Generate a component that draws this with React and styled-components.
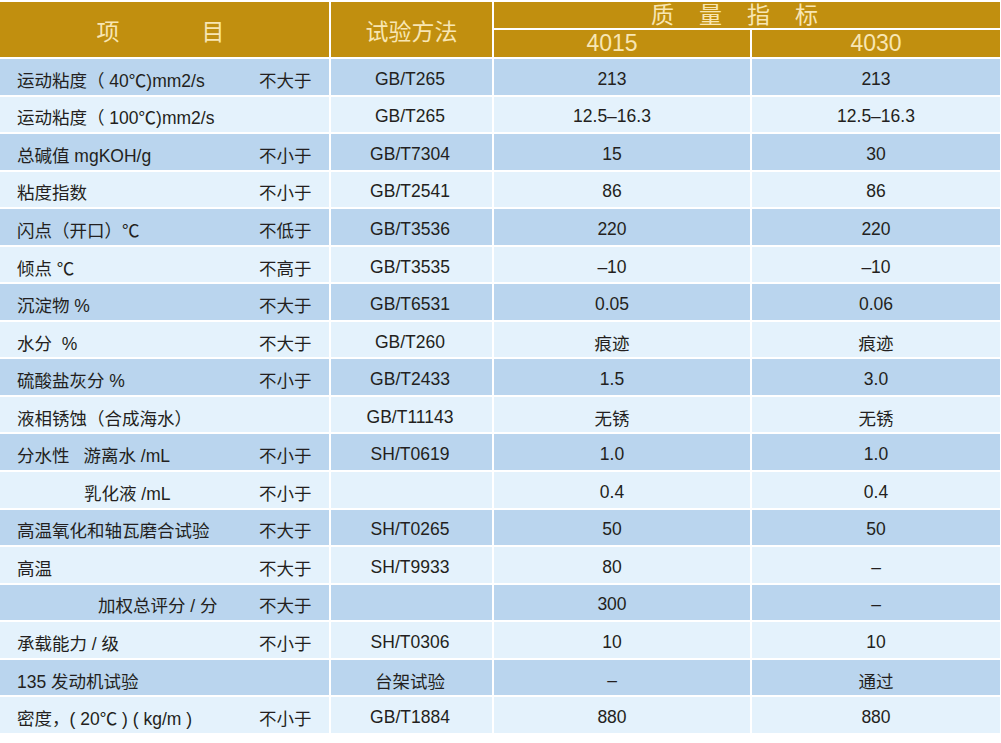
import React from "react";
import styled, { createGlobalStyle } from "styled-components";

const GlobalStyle = createGlobalStyle`
  body {
    margin: 0;
    background: #ffffff;
    font-family: "Liberation Sans", "Noto Sans CJK SC", sans-serif;
    color: #231f20;
  }
`;

const Sheet = styled.div`
  display: grid;
  grid-template-columns: 329px 161px 256px 248px;
  grid-template-rows: 26px 27px repeat(18, 35.55px);
  gap: 2px;
  padding-top: 2px;
  width: 1000px;
`;

const HeadCell = styled.div`
  grid-row: ${(p) => p.$row};
  grid-column: ${(p) => p.$col};
  background: #c18f0f;
  color: #f8e6b3;
  font-size: 23px;
  display: flex;
  align-items: center;
  justify-content: center;
  gap: ${(p) => p.$gap || 0}px;
  padding-right: ${(p) => p.$shift || 0}px;
  padding-top: ${(p) => p.$drop || 0}px;
  letter-spacing: ${(p) => p.$spacing || 0}px;
  line-height: 1;
`;

const Cell = styled.div`
  background: ${(p) => (p.$dark ? "#bad5ee" : "#e4f2fc")};
  font-size: 17.5px;
  display: flex;
  align-items: center;
  justify-content: center;
  padding-top: 5px;
  padding-right: ${(p) => p.$shift || 0}px;
  white-space: nowrap;
`;

const ItemCell = styled.div`
  background: ${(p) => (p.$dark ? "#bad5ee" : "#e4f2fc")};
  font-size: 17.5px;
  display: grid;
  grid-template-columns: 1fr 70px;
  align-items: center;
  padding-top: 5px;
  padding-left: ${(p) => p.$indent}px;
  white-space: nowrap;
`;

const Sub = styled.span`
  margin-left: 14px;
`;

const rows = [
  { name: "运动粘度（ 40℃)mm2/s", cond: "不大于", method: "GB/T265", a: "213", b: "213" },
  { name: "运动粘度（ 100℃)mm2/s", cond: "", method: "GB/T265", a: "12.5–16.3", b: "12.5–16.3" },
  { name: "总碱值 mgKOH/g", cond: "不小于", method: "GB/T7304", a: "15", b: "30" },
  { name: "粘度指数", cond: "不小于", method: "GB/T2541", a: "86", b: "86" },
  { name: "闪点（开口）℃", cond: "不低于", method: "GB/T3536", a: "220", b: "220" },
  { name: "倾点 ℃", cond: "不高于", method: "GB/T3535", a: "–10", b: "–10" },
  { name: "沉淀物 %", cond: "不大于", method: "GB/T6531", a: "0.05", b: "0.06" },
  { name: "水分\u00a0 %", cond: "不大于", method: "GB/T260", a: "痕迹", b: "痕迹" },
  { name: "硫酸盐灰分 %", cond: "不小于", method: "GB/T2433", a: "1.5", b: "3.0" },
  { name: "液相锈蚀（合成海水）", cond: "", method: "GB/T11143", a: "无锈", b: "无锈" },
  { name: "分水性", sub: "游离水 /mL", cond: "不小于", method: "SH/T0619", a: "1.0", b: "1.0" },
  { name: "乳化液 /mL", indent: 84, cond: "不小于", method: "", a: "0.4", b: "0.4" },
  { name: "高温氧化和轴瓦磨合试验", cond: "不大于", method: "SH/T0265", a: "50", b: "50" },
  { name: "高温", cond: "不大于", method: "SH/T9933", a: "80", b: "–" },
  { name: "加权总评分 / 分", indent: 98, cond: "不大于", method: "", a: "300", b: "–" },
  { name: "承载能力 / 级", cond: "不小于", method: "SH/T0306", a: "10", b: "10" },
  { name: "135 发动机试验", cond: "", method: "台架试验", a: "–", b: "通过" },
  { name: "密度，( 20℃ ) ( kg/m )", cond: "不小于", method: "GB/T1884", a: "880", b: "880" },
];

const App = () => {
  return (
    <>
      <GlobalStyle />
      <Sheet>
        <HeadCell $row="1 / 3" $col="1" $gap={82} $shift={8} $drop={6}>
          <span>项</span>
          <span>目</span>
        </HeadCell>
        <HeadCell $row="1 / 3" $col="2" $drop={6}>
          试验方法
        </HeadCell>
        <HeadCell $row="1" $col="3 / 5" $spacing={25}>
          质量指标
        </HeadCell>
        <HeadCell $row="2" $col="3" $shift={20}>
          4015
        </HeadCell>
        <HeadCell $row="2" $col="4">
          4030
        </HeadCell>

        {rows.map((row, index) => {
          const dark = index % 2 === 0;
          return (
            <React.Fragment key={index}>
              <ItemCell $dark={dark} $indent={row.indent || 17}>
                <span>
                  {row.name}
                  {row.sub && <Sub>{row.sub}</Sub>}
                </span>
                <span>{row.cond}</span>
              </ItemCell>
              <Cell $dark={dark} $shift={3}>{row.method}</Cell>
              <Cell $dark={dark} $shift={20}>{row.a}</Cell>
              <Cell $dark={dark}>{row.b}</Cell>
            </React.Fragment>
          );
        })}
      </Sheet>
    </>
  );
};

export default App;
